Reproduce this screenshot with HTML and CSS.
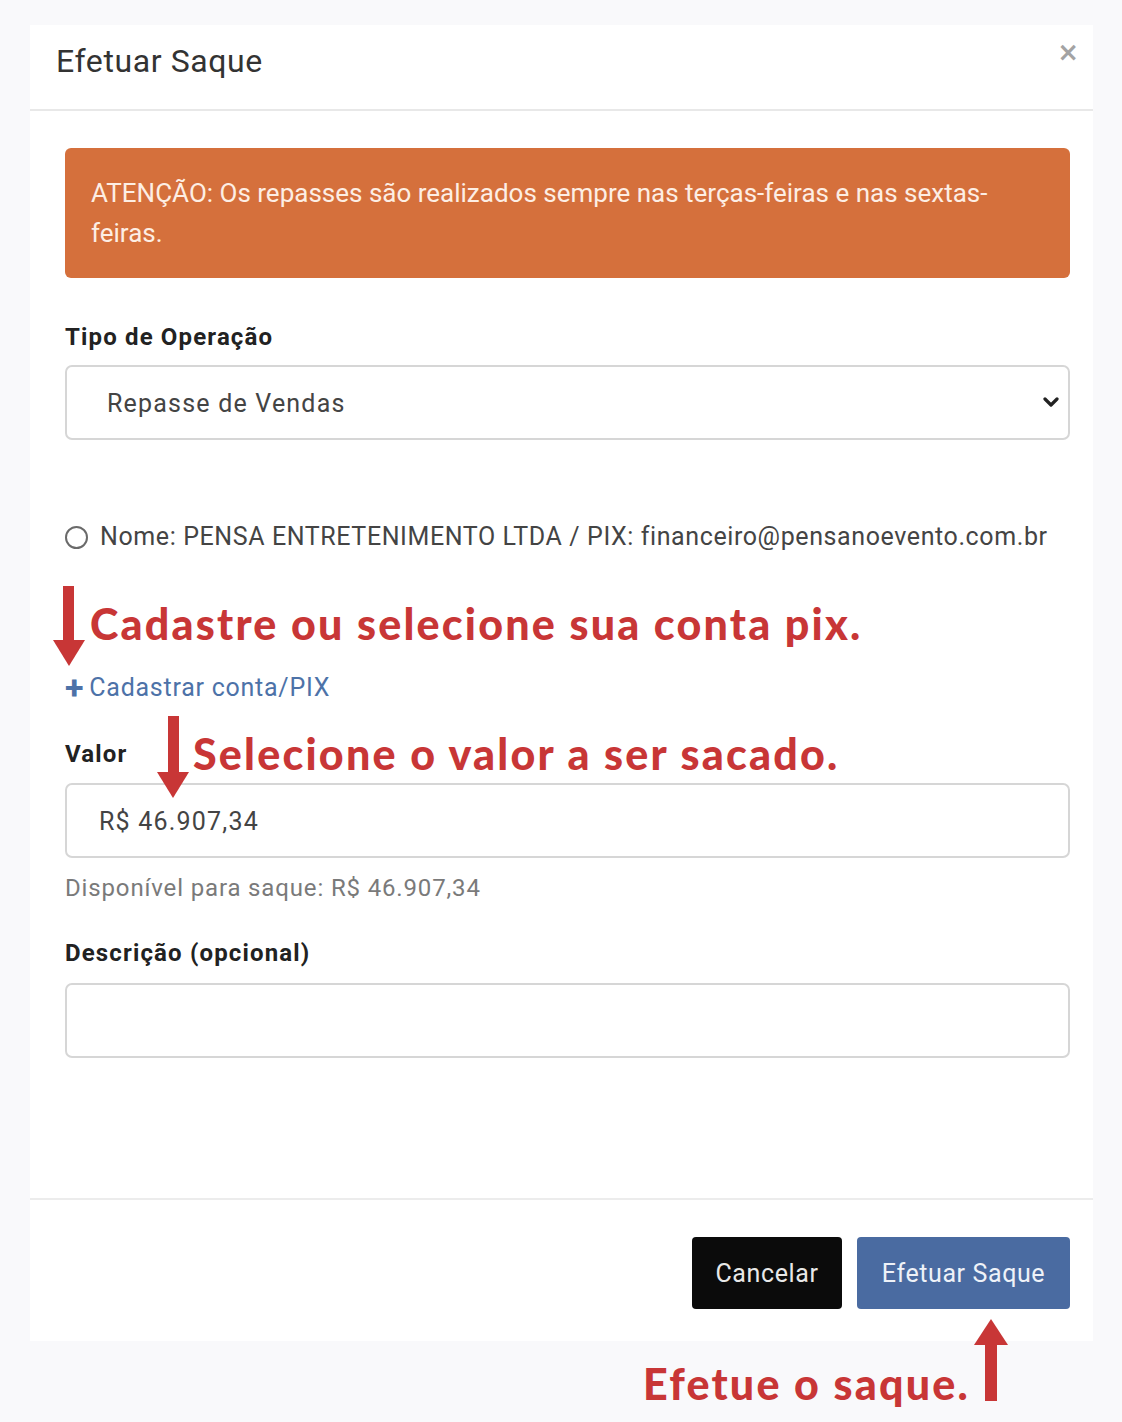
FILE: index.html
```html
<!DOCTYPE html>
<html lang="pt-BR">
<head>
<meta charset="utf-8">
<title>Efetuar Saque</title>
<link rel="stylesheet" href="styles.css">
</head>
<body>
<div class="page">
  <div class="modal">
    <div class="modal-header">
      <h1 class="modal-title">Efetuar Saque</h1>
      <button class="close" type="button">×</button>
    </div>
    <div class="modal-body">
      <div class="alert">ATENÇÃO: Os repasses são realizados sempre nas terças-feiras e nas sextas-feiras.</div>

      <label class="label label-first">Tipo de Operação</label>
      <div class="select">
        <span>Repasse de Vendas</span>
        <svg class="chevron" width="16" height="12" viewBox="0 0 16 12"><path d="M2 3 L8 9 L14 3" fill="none" stroke="#222" stroke-width="3.2" stroke-linecap="round" stroke-linejoin="round"/></svg>
      </div>

      <div class="radio-row">
        <span class="radio"></span>
        <span>Nome: PENSA ENTRETENIMENTO LTDA / PIX: financeiro@pensanoevento.com.br</span>
      </div>

      <a class="add-link" href="#"><span class="plus">+</span>Cadastrar conta/PIX</a>

      <label class="label label-valor">Valor</label>
      <div class="input"><span>R$ 46.907,34</span></div>
      <div class="help">Disponível para saque: R$ 46.907,34</div>

      <label class="label label-desc">Descrição (opcional)</label>
      <div class="input textarea"></div>
    </div>
    <div class="modal-footer">
      <button class="btn btn-dark" type="button">Cancelar</button>
      <button class="btn btn-primary" type="button">Efetuar Saque</button>
    </div>
  </div>

  <div class="note note-1">Cadastre ou selecione sua conta pix.</div>
  <div class="note note-2">Selecione o valor a ser sacado.</div>
  <div class="note note-3">Efetue o saque.</div>

  <svg class="arrow arrow-1" width="34" height="80" viewBox="0 0 34 80"><rect x="10" y="0" width="11" height="56" fill="#c83636"/><polygon points="0,54 32,54 16,80" fill="#c83636"/></svg>
  <svg class="arrow arrow-2" width="34" height="82" viewBox="0 0 34 82"><rect x="11" y="0" width="11" height="58" fill="#c83636"/><polygon points="0,56 32,56 16,82" fill="#c83636"/></svg>
  <svg class="arrow arrow-3" width="36" height="82" viewBox="0 0 36 82"><polygon points="18,0 35,26 1,26" fill="#c83636"/><rect x="12" y="24" width="12" height="58" fill="#c83636"/></svg>
</div>
</body>
</html>
```

FILE: styles.css
```css
* { box-sizing: border-box; }

html, body {
  margin: 0;
  padding: 0;
  background: #f9f9fb;
}

body {
  font-family: Roboto, "Liberation Sans", sans-serif;
  color: #333;
}

.page {
  position: relative;
  width: 1122px;
  height: 1422px;
  padding: 25px 29px 0 30px;
}

.modal {
  background: #fff;
  width: 1063px;
}

.modal-header {
  height: 86px;
  display: flex;
  align-items: flex-start;
  justify-content: space-between;
  padding: 0 14px 0 26px;
  border-bottom: 2px solid #e8e8e8;
}

.modal-title {
  margin: 14px 0 0;
  font-size: 32px;
  font-weight: 400;
  color: #333;
  line-height: 44px;
  letter-spacing: 0.6px;
}

.close {
  margin-top: 14px;
  border: 0;
  background: none;
  padding: 0;
  font-family: "DejaVu Sans", sans-serif;
  font-size: 26px;
  font-weight: 700;
  line-height: 26px;
  color: #a3a3a3;
}

.modal-body {
  padding: 37px 23px 140px 35px;
}

.alert {
  background: #d5703c;
  color: #fdeee4;
  border-radius: 6px;
  padding: 25px 49px 25px 26px;
  font-size: 26px;
  line-height: 40px;
  letter-spacing: 0;
  height: 130px;
}

.label {
  display: block;
  font-size: 24px;
  font-weight: 700;
  color: #222;
  line-height: 30px;
  letter-spacing: 1.15px;
}

.label-first { margin-top: 44px; }
.label-valor { margin-top: 36px; }
.label-desc { margin-top: 35px; }

.select, .input {
  margin-top: 13px;
  height: 75px;
  border: 2px solid #d6d6d6;
  border-radius: 7px;
  display: flex;
  align-items: center;
  font-size: 25px;
  color: #444;
}

.select {
  padding: 2px 9px 0 40px;
  justify-content: space-between;
  letter-spacing: 1.2px;
}

.chevron { margin-top: -4px; }

.input {
  margin-top: 14px;
  padding: 2px 32px 0;
  letter-spacing: 1.2px;
}

.radio-row {
  margin-top: 82px;
  display: flex;
  align-items: center;
  gap: 12px;
  font-size: 25px;
  line-height: 30px;
  color: #444;
  letter-spacing: 0.6px;
}

.radio {
  width: 23px;
  height: 23px;
  border: 2px solid #6a6a6a;
  border-radius: 50%;
  flex: none;
}

.add-link {
  display: flex;
  align-items: center;
  margin-top: 121px;
  font-size: 25px;
  line-height: 30px;
  color: #4d72a8;
  text-decoration: none;
  letter-spacing: 0.75px;
}

.plus {
  font-size: 34px;
  font-weight: 700;
  margin-right: 5px;
  margin-top: -3px;
}

.help {
  margin-top: 15px;
  font-size: 24px;
  line-height: 30px;
  color: #7a7a7a;
  letter-spacing: 0.85px;
}

.textarea {
  margin-top: 15px;
}

.modal-footer {
  border-top: 2px solid #ececec;
  display: flex;
  justify-content: flex-end;
  gap: 15px;
  padding: 37px 23px 32px 0;
}

.btn {
  height: 72px;
  border: 0;
  border-radius: 4px;
  font-family: Roboto, "Liberation Sans", sans-serif;
  font-size: 25px;
  color: #eef2f8;
  padding: 0;
  letter-spacing: 0.6px;
}

.btn-dark {
  width: 150px;
  background: #0b0b0b;
  color: #e8e8e8;
}

.btn-primary {
  width: 213px;
  background: #4a6ba1;
}

.note {
  position: absolute;
  font-family: Lato, "Open Sans", sans-serif;
  font-weight: 900;
  color: #c83636;
  font-size: 43px;
  line-height: 50px;
  white-space: nowrap;
  letter-spacing: 2.2px;
}

.note-1 { left: 90px; top: 599px; }
.note-2 { left: 193px; top: 729px; }
.note-3 { left: 643px; top: 1359px; }

.arrow { position: absolute; }
.arrow-1 { left: 53px; top: 586px; }
.arrow-2 { left: 157px; top: 716px; }
.arrow-3 { left: 973px; top: 1319px; }
```
